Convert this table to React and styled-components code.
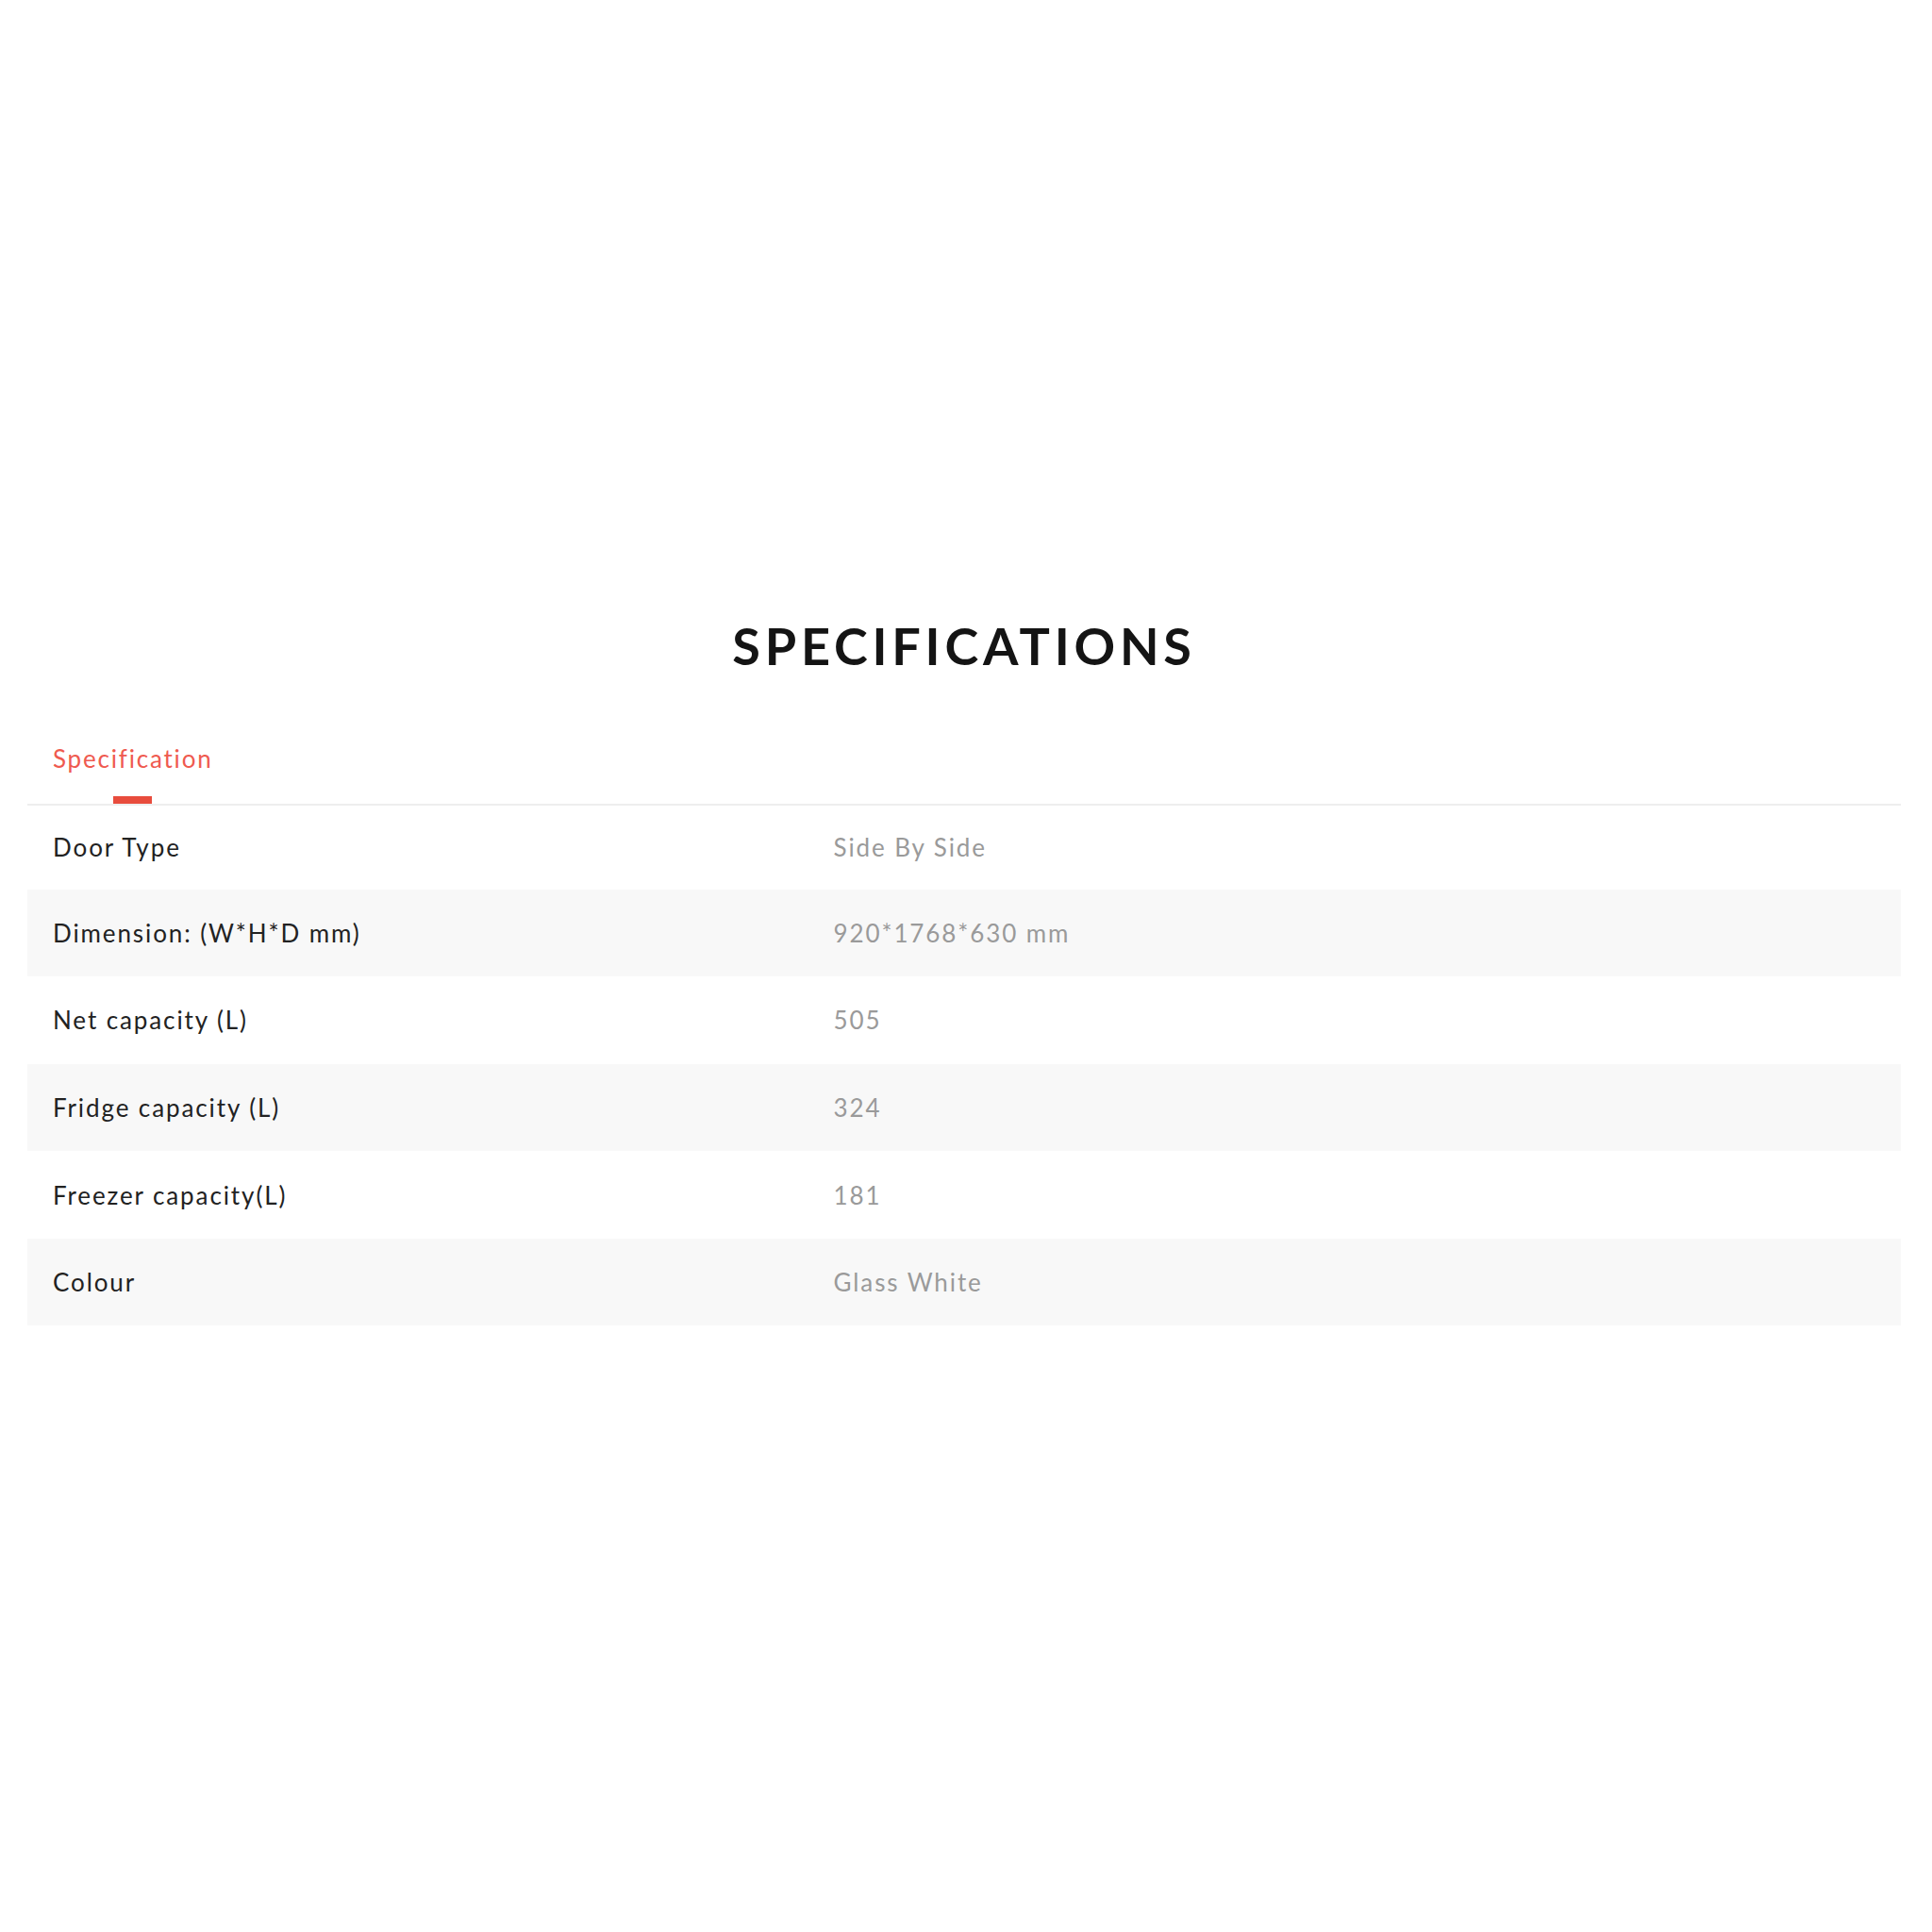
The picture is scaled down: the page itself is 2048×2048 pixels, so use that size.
import React from "react";
import styled, { createGlobalStyle } from "styled-components";

const specs = [
  { label: "Door Type", value: "Side By Side" },
  { label: "Dimension: (W*H*D mm)", value: "920*1768*630 mm" },
  { label: "Net capacity (L)", value: "505" },
  { label: "Fridge capacity (L)", value: "324" },
  { label: "Freezer capacity(L)", value: "181" },
  { label: "Colour", value: "Glass White" },
];

export default function App() {
  return (
    <>
      <GlobalStyle />
      <Page>
        <Title>SPECIFICATIONS</Title>
        <TabBar>
          <Tab>
            <TabLabel>Specification</TabLabel>
            <TabIndicator />
          </Tab>
        </TabBar>
        <Table>
          {specs.map((item, i) => (
            <Row key={item.label} $shaded={i % 2 === 1}>
              <Label>{item.label}</Label>
              <Value>{item.value}</Value>
            </Row>
          ))}
        </Table>
      </Page>
    </>
  );
}

const GlobalStyle = createGlobalStyle`
  html, body {
    margin: 0;
    background: #fff;
  }
  body {
    font-family: Lato, "Open Sans", sans-serif;
    min-height: 2048px;
  }
`;

const Page = styled.div`
  padding: 640px 33px 0 29px;
`;

const Title = styled.h2`
  margin: 0;
  text-align: center;
  font-size: 54px;
  line-height: 90px;
  font-weight: 700;
  letter-spacing: 4.8px;
  color: #141414;
`;

const TabBar = styled.div`
  display: flex;
  margin-top: 56px;
  border-bottom: 2px solid #eeeeee;
`;

const Tab = styled.div`
  display: flex;
  flex-direction: column;
  align-items: center;
  margin-left: 27px;
  cursor: pointer;
`;

const TabLabel = styled.span`
  font-size: 26px;
  line-height: 36px;
  color: #ef5a4f;
  letter-spacing: 1.8px;
`;

const TabIndicator = styled.span`
  display: block;
  width: 41px;
  height: 8px;
  margin-top: 22px;
  background: #e84c3d;
`;

const Table = styled.div`
  display: flex;
  flex-direction: column;
`;

const Row = styled.div`
  display: grid;
  grid-template-columns: 5fr 7fr;
  align-items: center;
  height: 92.6px;
  background: ${(p) => (p.$shaded ? "#f8f8f8" : "#fff")};

  &:first-child {
    height: 88.5px;
  }
`;

const Label = styled.span`
  padding-left: 27px;
  font-size: 26px;
  color: #222;
  letter-spacing: 1.9px;
`;

const Value = styled.span`
  padding-left: 27px;
  font-size: 26px;
  color: #9a9a9a;
  letter-spacing: 1.9px;
`;
